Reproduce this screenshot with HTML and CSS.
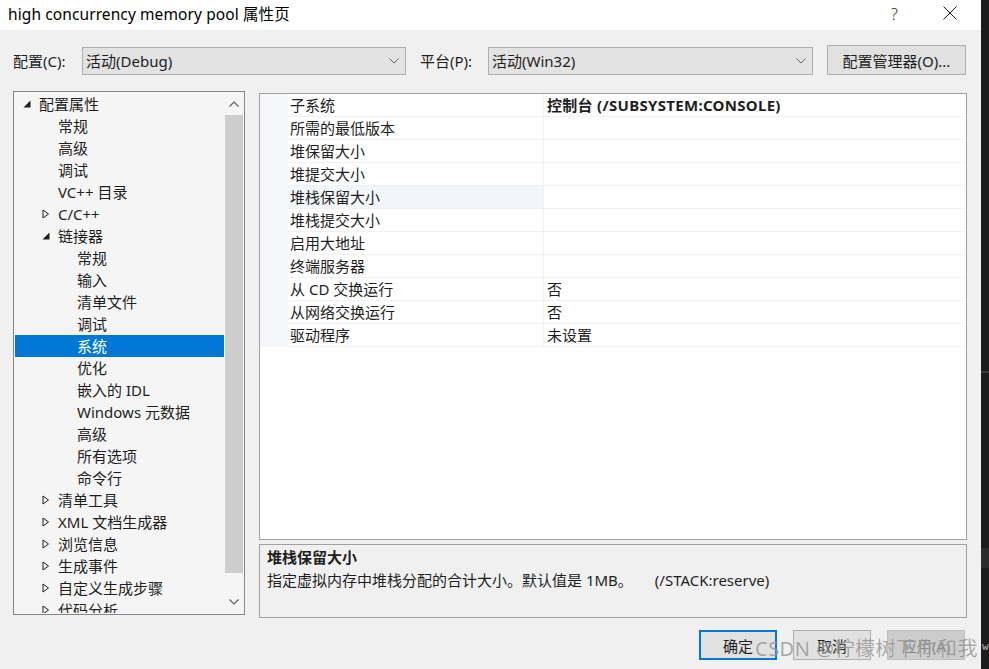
FILE: index.html
```html
<!DOCTYPE html>
<html lang="zh">
<head>
<meta charset="utf-8">
<title>high concurrency memory pool 属性页</title>
<link rel="stylesheet" href="styles.css">
</head>
<body>
<div class="screen">
  <div class="dialog">
    <div class="titlebar">
      <span class="title">high concurrency memory pool 属性页</span>
      <span class="help">?</span>
      <span class="close"><svg width="14" height="14" viewBox="0 0 14 14"><path d="M0.5 0.5 L13.5 13.5 M13.5 0.5 L0.5 13.5" stroke="#1e1e1e" stroke-width="1" fill="none"/></svg></span>
    </div>

    <div class="toolbar">
      <span class="lbl lbl-config">配置(C):</span>
      <div class="combo combo-config"><span>活动(Debug)</span><svg class="chev" width="10" height="6" viewBox="0 0 10 6"><path d="M0.5 0.5 L5 5 L9.5 0.5" stroke="#606060" fill="none"/></svg></div>
      <span class="lbl lbl-platform">平台(P):</span>
      <div class="combo combo-platform"><span>活动(Win32)</span><svg class="chev" width="10" height="6" viewBox="0 0 10 6"><path d="M0.5 0.5 L5 5 L9.5 0.5" stroke="#606060" fill="none"/></svg></div>
      <button class="btn btn-manager">配置管理器(O)...</button>
    </div>

    <div class="main">
      <div class="tree">
        <ul class="tree-list">
          <li class="item lvl0"><span class="tw"><svg width="8" height="8" viewBox="0 0 8 8"><path d="M7.5 0.5 L7.5 7.5 L0.5 7.5 Z" fill="#1e1e1e"/></svg></span>配置属性</li>
          <li class="item lvl1"><span class="tw"></span>常规</li>
          <li class="item lvl1"><span class="tw"></span>高级</li>
          <li class="item lvl1"><span class="tw"></span>调试</li>
          <li class="item lvl1"><span class="tw"></span>VC++ 目录</li>
          <li class="item lvl1"><span class="tw"><svg width="8" height="10" viewBox="0 0 8 10"><path d="M1 1 L6.5 5 L1 9 Z" fill="none" stroke="#1e1e1e"/></svg></span>C/C++</li>
          <li class="item lvl1"><span class="tw"><svg width="8" height="8" viewBox="0 0 8 8"><path d="M7.5 0.5 L7.5 7.5 L0.5 7.5 Z" fill="#1e1e1e"/></svg></span>链接器</li>
          <li class="item lvl2"><span class="tw"></span>常规</li>
          <li class="item lvl2"><span class="tw"></span>输入</li>
          <li class="item lvl2"><span class="tw"></span>清单文件</li>
          <li class="item lvl2"><span class="tw"></span>调试</li>
          <li class="item lvl2 selected"><span class="tw"></span>系统</li>
          <li class="item lvl2"><span class="tw"></span>优化</li>
          <li class="item lvl2"><span class="tw"></span>嵌入的 IDL</li>
          <li class="item lvl2"><span class="tw"></span>Windows 元数据</li>
          <li class="item lvl2"><span class="tw"></span>高级</li>
          <li class="item lvl2"><span class="tw"></span>所有选项</li>
          <li class="item lvl2"><span class="tw"></span>命令行</li>
          <li class="item lvl1"><span class="tw"><svg width="8" height="10" viewBox="0 0 8 10"><path d="M1 1 L6.5 5 L1 9 Z" fill="none" stroke="#1e1e1e"/></svg></span>清单工具</li>
          <li class="item lvl1"><span class="tw"><svg width="8" height="10" viewBox="0 0 8 10"><path d="M1 1 L6.5 5 L1 9 Z" fill="none" stroke="#1e1e1e"/></svg></span>XML 文档生成器</li>
          <li class="item lvl1"><span class="tw"><svg width="8" height="10" viewBox="0 0 8 10"><path d="M1 1 L6.5 5 L1 9 Z" fill="none" stroke="#1e1e1e"/></svg></span>浏览信息</li>
          <li class="item lvl1"><span class="tw"><svg width="8" height="10" viewBox="0 0 8 10"><path d="M1 1 L6.5 5 L1 9 Z" fill="none" stroke="#1e1e1e"/></svg></span>生成事件</li>
          <li class="item lvl1"><span class="tw"><svg width="8" height="10" viewBox="0 0 8 10"><path d="M1 1 L6.5 5 L1 9 Z" fill="none" stroke="#1e1e1e"/></svg></span>自定义生成步骤</li>
          <li class="item lvl1"><span class="tw"><svg width="8" height="10" viewBox="0 0 8 10"><path d="M1 1 L6.5 5 L1 9 Z" fill="none" stroke="#1e1e1e"/></svg></span>代码分析</li>
        </ul>
        <div class="vscroll">
          <div class="sarrow"><svg width="10" height="6" viewBox="0 0 10 6"><path d="M0.5 5.5 L5 1 L9.5 5.5" stroke="#606060" stroke-width="1.2" fill="none"/></svg></div>
          <div class="track"><div class="thumb"></div></div>
          <div class="sarrow"><svg width="10" height="6" viewBox="0 0 10 6"><path d="M0.5 0.5 L5 5 L9.5 0.5" stroke="#606060" stroke-width="1.2" fill="none"/></svg></div>
        </div>
      </div>

      <div class="right">
        <div class="grid">
          <div class="row"><span class="gut"></span><span class="name">子系统</span><span class="val bold">控制台 (/SUBSYSTEM:CONSOLE)</span></div>
          <div class="row"><span class="gut"></span><span class="name">所需的最低版本</span><span class="val"></span></div>
          <div class="row"><span class="gut"></span><span class="name">堆保留大小</span><span class="val"></span></div>
          <div class="row"><span class="gut"></span><span class="name">堆提交大小</span><span class="val"></span></div>
          <div class="row"><span class="gut"></span><span class="name sel">堆栈保留大小</span><span class="val"></span></div>
          <div class="row"><span class="gut"></span><span class="name">堆栈提交大小</span><span class="val"></span></div>
          <div class="row"><span class="gut"></span><span class="name">启用大地址</span><span class="val"></span></div>
          <div class="row"><span class="gut"></span><span class="name">终端服务器</span><span class="val"></span></div>
          <div class="row"><span class="gut"></span><span class="name">从 CD 交换运行</span><span class="val">否</span></div>
          <div class="row"><span class="gut"></span><span class="name">从网络交换运行</span><span class="val">否</span></div>
          <div class="row"><span class="gut"></span><span class="name">驱动程序</span><span class="val">未设置</span></div>
        </div>
        <div class="desc">
          <div class="desc-title">堆栈保留大小</div>
          <div class="desc-text">指定虚拟内存中堆栈分配的合计大小。默认值是 1MB。<span class="switch">(/STACK:reserve)</span></div>
        </div>
      </div>
    </div>

    <div class="footer">
      <button class="btn fbtn default">确定</button>
      <button class="btn fbtn">取消</button>
      <button class="btn fbtn disabled">应用(A)</button>
    </div>
  </div>
  <div class="side">
    <div class="side-line one"></div>
    <div class="side-block"></div>
    <span class="side-text">ws</span>
  </div>
  <div class="watermark">CSDN @柠檬树下你和我</div>
</div>
</body>
</html>
```

FILE: styles.css
```css
* { box-sizing: border-box; }
html, body { margin: 0; padding: 0; }
body {
  width: 989px;
  height: 669px;
  overflow: hidden;
  background: #1e1e1e;
  font-family: "Noto Sans", "Noto Sans CJK SC", sans-serif;
  font-size: 15px;
  color: #1e1e1e;
}
.screen {
  position: relative;
  display: flex;
  width: 989px;
  height: 669px;
}
.dialog {
  width: 981px;
  height: 669px;
  background: #f0f0f0;
  display: flex;
  flex-direction: column;
}
.side {
  position: relative;
  flex: 1;
  background: #1c1c1c;
}
.side-line.one {
  position: absolute;
  top: 371px;
  left: 0; right: 0;
  height: 2px;
  background: #3a3a3a;
}
.side-block {
  position: absolute;
  top: 548px;
  left: 0; right: 0;
  height: 20px;
  background: #2b2b2b;
}
.side-text {
  position: absolute;
  top: 640px;
  left: 1px;
  font-size: 11px;
  color: #bbbbbb;
  font-family: "DejaVu Sans Mono", monospace;
}

/* title bar */
.titlebar {
  height: 30px;
  background: #ffffff;
  display: flex;
  align-items: center;
  padding-left: 8px;
}
.title {
  font-size: 15.5px;
  line-height: 20px;
  margin-top: -2px;
  color: #000;
  letter-spacing: 0.1px;
}
.help {
  margin-left: auto;
  width: 14px;
  font-size: 16px;
  line-height: 20px;
  margin-top: -3px;
  color: #1e1e1e;
  font-weight: 300;
}
.close {
  width: 14px;
  height: 14px;
  margin-left: 38px;
  margin-right: 24px;
  margin-top: -4px;
  display: flex;
}

/* toolbar */
.toolbar {
  margin-top: 15px;
  height: 30px;
  display: flex;
  align-items: flex-end;
  padding-left: 13px;
}
.lbl {
  height: 28px;
  line-height: 28px;
  white-space: nowrap;
}
.lbl-config { width: 69px; }
.lbl-platform { width: 68px; margin-left: 14px; }
.combo {
  height: 28px;
  border: 1px solid #adadad;
  background: #e3e3e3;
  display: flex;
  align-items: center;
  padding-left: 3px;
  padding-right: 6px;
}
.combo span { flex: 1; line-height: 26px; }
.combo-config { width: 324px; }
.combo-platform { width: 325px; }
.chev { display: block; }
.btn {
  font-family: "Noto Sans", "Noto Sans CJK SC", sans-serif;
  font-size: 15px;
  color: #1e1e1e;
  background: #e1e1e1;
  border: 1px solid #adadad;
  padding: 0;
  margin: 0;
}
.btn-manager {
  width: 139px;
  height: 30px;
  margin-left: 14px;
}

/* main */
.main {
  margin-top: 16px;
  height: 527px;
  display: flex;
  padding-left: 13px;
}
.tree {
  width: 232px;
  height: 524px;
  border: 1px solid #828790;
  background: #f5f5f5;
  padding: 1px;
  display: flex;
  overflow: hidden;
}
.tree-list {
  list-style: none;
  margin: 0;
  padding: 0;
  width: 209px;
  height: 520px;
  overflow: hidden;
}
.item {
  height: 22px;
  line-height: 22px;
  display: flex;
  align-items: center;
  white-space: nowrap;
}
.item.lvl0 { padding-left: 5px; }
.item.lvl1 { padding-left: 24px; }
.item.lvl2 { padding-left: 43px; }
.item.selected { background: #0078d7; color: #ffffff; }
.tw {
  width: 19px;
  height: 22px;
  display: flex;
  align-items: center;
  padding-left: 3px;
  flex-shrink: 0;
}
.tw svg { display: block; }
.vscroll {
  width: 19px;
  height: 520px;
  display: flex;
  flex-direction: column;
  margin-left: auto;
}
.sarrow {
  height: 22px;
  display: flex;
  align-items: center;
  justify-content: center;
}
.track {
  flex: 1;
  padding: 0 0 0 1px;
}
.thumb {
  height: 458px;
  background: #cdcdcd;
}

/* right side */
.right {
  margin-left: 14px;
  width: 708px;
  display: flex;
  flex-direction: column;
}
.grid {
  margin-top: 2px;
  height: 447px;
  border: 1px solid #a0a0a0;
  background: #ffffff;
}
.row {
  display: grid;
  grid-template-columns: 28px 256px 1fr;
  height: 23px;
}
.gut { background: #f4f6f9; }
.name, .val {
  border-bottom: 1px solid #eef1f6;
  line-height: 22px;
  white-space: nowrap;
  overflow: hidden;
}
.name {
  padding-left: 2px;
  border-right: 1px solid #eef1f6;
}
.name.sel { background: #f2f5fa; }
.val { padding-left: 3px; }
.bold { font-weight: 700; letter-spacing: 0.3px; }

.desc {
  margin-top: 4px;
  height: 74px;
  border: 1px solid #a0a0a0;
  background: #f0f0f0;
  padding: 1px 7px 0;
}
.desc-title { font-weight: 700; line-height: 23px; }
.desc-text { line-height: 23px; white-space: nowrap; }
.switch { margin-left: 22px; }

/* footer */
.footer {
  margin-top: 12px;
  display: flex;
  justify-content: flex-end;
  gap: 16px;
  padding-right: 16px;
}
.fbtn {
  width: 78px;
  height: 30px;
}
.fbtn.default { border: 2px solid #0078d7; }
.fbtn.disabled {
  background: #cccccc;
  border-color: #bfbfbf;
  color: #838383;
}

/* watermark overlay */
.watermark {
  position: absolute;
  left: 755px;
  top: 636px;
  font-size: 20px;
  line-height: 26px;
  color: rgba(110, 110, 110, 0.6);
  text-shadow: 0 0 1px rgba(255,255,255,0.6);
  white-space: nowrap;
  letter-spacing: 0.5px;
}
```
